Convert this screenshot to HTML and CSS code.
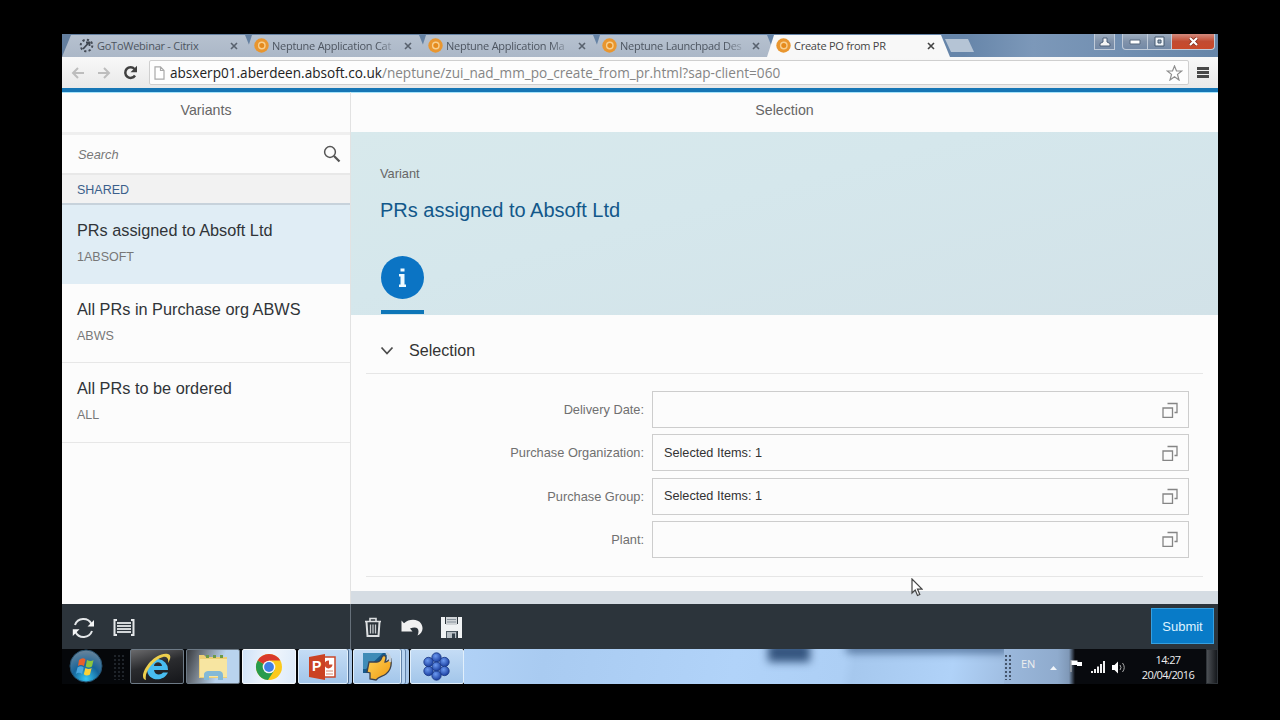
FILE: index.html
```html
<!DOCTYPE html>
<html lang="en">
<head>
<meta charset="utf-8">
<title>Create PO from PR</title>
<link rel="stylesheet" href="styles.css">
</head>
<body>
<svg class="defs" width="0" height="0" aria-hidden="true">
  <defs>
    <radialGradient id="orb" cx="50%" cy="90%" r="95%"><stop offset="0" stop-color="#35c8f5"/><stop offset=".45" stop-color="#16659b"/><stop offset="1" stop-color="#75899b"/></radialGradient>
    <radialGradient id="petal" cx="40%" cy="35%" r="65%"><stop offset="0" stop-color="#6c9af0"/><stop offset="1" stop-color="#1b3fa0"/></radialGradient>
    <linearGradient id="gold" x1="0" y1="0" x2="1" y2="1"><stop offset="0" stop-color="#ffd45a"/><stop offset="1" stop-color="#f09a10"/></linearGradient>
    <symbol id="ring" viewBox="0 0 15 15"><circle cx="7.5" cy="7.5" r="7.2" fill="#e9962f"/><circle cx="7.8" cy="7.5" r="3.2" fill="#e58a1c" stroke="#f8cf8e" stroke-width="1.4"/></symbol>
    <symbol id="help" viewBox="0 0 16 16"><path d="M1 6h9.500v9.500H1zM5.500 1.500H15v9h-2.500" fill="none" stroke="#858585" stroke-width="1.300"/></symbol>
  </defs>
</svg>
<div class="screen">
  <div class="tabstrip">
    <div class="tab first"><svg width="15" height="15" viewBox="0 0 15 15"><circle cx="7.500" cy="7.500" r="5.800" fill="none" stroke="#454c56" stroke-width="2" stroke-dasharray="2.200 2.300"/><path d="M4 11l5.500-6M7 4.500h3.500V8" fill="none" stroke="#3f4650" stroke-width="1.800"/></svg><span class="t">GoToWebinar - Citrix</span><svg class="x" viewBox="0 0 8 8"><path d="M1 1l6 6M7 1L1 7"/></svg></div>
    <div class="tab"><svg width="15" height="15"><use href="#ring"/></svg><span class="t fade">Neptune Application Cat</span><svg class="x" viewBox="0 0 8 8"><path d="M1 1l6 6M7 1L1 7"/></svg></div>
    <div class="tab"><svg width="15" height="15"><use href="#ring"/></svg><span class="t fade">Neptune Application Ma</span><svg class="x" viewBox="0 0 8 8"><path d="M1 1l6 6M7 1L1 7"/></svg></div>
    <div class="tab"><svg width="15" height="15"><use href="#ring"/></svg><span class="t fade">Neptune Launchpad Des</span><svg class="x" viewBox="0 0 8 8"><path d="M1 1l6 6M7 1L1 7"/></svg></div>
    <div class="tab active"><svg width="15" height="15"><use href="#ring"/></svg><span class="t">Create PO from PR</span><svg class="x" viewBox="0 0 8 8"><path d="M1 1l6 6M7 1L1 7"/></svg></div>
    <div class="newtab"></div>
    <div class="winbtns">
      <div class="wb user"><svg width="12" height="10" viewBox="0 0 12 10"><path d="M4 1h4v4l3 1.500V9H1V6.500L4 5z" fill="#f5f5f5" stroke="#4c5f78"/></svg></div>
      <div class="wb min"><svg width="12" height="6" viewBox="0 0 12 6"><path d="M1 1h10v4H1z" fill="#fff" stroke="#56687f"/></svg></div><div class="wb max"><svg width="11" height="11" viewBox="0 0 11 11"><path d="M1 1h9v9H1z" fill="#eef3f8" stroke="#45586f"/><path d="M4 4h3v3H4z" fill="#9ab" stroke="#45586f"/></svg></div><div class="wb close"><svg width="11" height="9" viewBox="0 0 11 9"><path d="M2 1l7 7M9 1L2 8" stroke="#7d2a1a" stroke-width="3.600"/><path d="M2 1l7 7M9 1L2 8" stroke="#fff" stroke-width="2.200"/></svg></div>
    </div>
  </div>
  <div class="toolbar">
    <svg class="nav" width="14" height="14" viewBox="0 0 14 14"><path d="M13 7H2M7 2L2 7l5 5"/></svg>
    <svg class="nav fwd" width="14" height="14" viewBox="0 0 14 14"><path d="M1 7h11M7 2l5 5-5 5"/></svg>
    <svg class="reload" width="15" height="15" viewBox="0 0 15 15"><path d="M12 10.500A5.300 5.300 0 1 1 11.500 4" fill="none" stroke="#404040" stroke-width="2.500"/><path d="M14 .8v6.500H7.500z" fill="#404040"/></svg>
    <div class="omnibox">
      <svg width="11" height="14" viewBox="0 0 11 14"><path d="M1 .8h5.500L10 4.500v8.700H1zM6.500 .8v3.700H10" fill="#fff" stroke="#a9a9a9" stroke-width="1.200"/></svg>
      <span class="url"><b>absxerp01.aberdeen.absoft.co.uk</b>/neptune/zui_nad_mm_po_create_from_pr.html?sap-client=060</span>
      <svg class="star" width="17" height="16" viewBox="0 0 17 16"><path d="M8.500 1l2 5h5.200l-4.200 3.400L13 15l-4.500-3.200L4 15l1.500-5.600L1.300 6h5.200z" fill="#fff" stroke="#8e8e8e" stroke-width="1.200"/></svg>
    </div>
    <div class="burger"><i></i><i></i><i></i></div>
  </div>
  <div class="app">
    <aside class="master">
      <div class="bar">Variants</div>
      <div class="search"><span>Search</span><svg width="18" height="18" viewBox="0 0 18 18"><circle cx="7" cy="7" r="5.400" fill="none" stroke="#555" stroke-width="1.500"/><path d="M11 11l5.500 5.500" stroke="#555" stroke-width="2.300"/></svg></div>
      <div class="group">SHARED</div>
      <div class="item sel"><div class="title">PRs assigned to Absoft Ltd</div><div class="sub">1ABSOFT</div></div>
      <div class="item"><div class="title">All PRs in Purchase org ABWS</div><div class="sub">ABWS</div></div>
      <div class="item"><div class="title">All PRs to be ordered</div><div class="sub">ALL</div></div>
      <div class="foot">
        <svg width="23" height="22" viewBox="0 0 23 22"><path d="M3 8A9 9 0 0 1 19.500 7M20 14A9 9 0 0 1 3.500 15" fill="none" stroke="#e4e7e9" stroke-width="2"/><path d="M22 3v6.500h-6.500zM.8 19v-6.800h6.700z" fill="#f4f5f6"/></svg>
        <svg class="lst" width="22" height="17" viewBox="0 0 22 17"><path d="M4 1H1.500v15H4M18 1h2.500v15H18" fill="none" stroke="#e4e7e9" stroke-width="2"/><path d="M4 4h14M4 7h14M4 10h14M4 13h14" stroke="#d2d6d8" stroke-width="1.800"/></svg>
      </div>
    </aside>
    <main class="detail">
      <div class="bar">Selection</div>
      <section class="object">
        <div class="kind">Variant</div>
        <div class="name">PRs assigned to Absoft Ltd</div>
        <div class="info"><svg width="43" height="43" viewBox="0 0 43 43"><circle cx="21.500" cy="21.500" r="21.500" fill="#0b74c4"/><path d="M19.500 12.500h4v3h-4zM18 18h5.500v10.500h1.500V31h-7v-2.500h1.500v-8H18z" fill="#edfaff"/></svg></div>
      </section>
      <section class="panel">
        <div class="phead"><svg width="14" height="10" viewBox="0 0 14 10"><path d="M1.500 1.500L7 7.500l5.500-6" fill="none" stroke="#4d4d4d" stroke-width="1.800"/></svg><span>Selection</span></div>
        <div class="form">
          <label>Delivery Date:</label><div class="input"><span></span><svg width="16" height="16"><use href="#help"/></svg></div>
          <label>Purchase Organization:</label><div class="input"><span>Selected Items: 1</span><svg width="16" height="16"><use href="#help"/></svg></div>
          <label>Purchase Group:</label><div class="input"><span>Selected Items: 1</span><svg width="16" height="16"><use href="#help"/></svg></div>
          <label>Plant:</label><div class="input"><span></span><svg width="16" height="16"><use href="#help"/></svg></div>
        </div>
      </section>
      <div class="gap"></div>
      <div class="foot">
        <svg width="18" height="20" viewBox="0 0 18 20"><path d="M1 4.500h16M6 4V1.500h6V4" fill="none" stroke="#dcdfe1" stroke-width="1.600"/><path d="M2.500 5l1 14h11l1-14" fill="none" stroke="#dcdfe1" stroke-width="2"/><path d="M6.500 7.500v9M9 7.500v9M11.500 7.500v9" stroke="#c6cacd" stroke-width="1.300"/></svg>
        <svg class="undo" width="22" height="17" viewBox="0 0 22 17"><path d="M.5 1.500L3 4.200C8-.5 17-.3 20 4.500c3 5 1.500 9.500-3.500 12C19 11 17 6.500 9 9.500l2.500 3L.5 12.500z" fill="#f1f1f1"/></svg>
        <svg class="save" width="21" height="21" viewBox="0 0 21 21"><path d="M0 0h4v8h13V0h4v21h-4v-8H5v8H0z" fill="#f0f2f3"/><path d="M0 7h21v7H0z" fill="#f0f2f3"/><path d="M5 0h11v8H5z" fill="#cfd3d6"/><path d="M6 2.500h9M6 5h9" stroke="#87919a" stroke-width="1"/><path d="M5 14h11v7H5z" fill="#4c5861"/><path d="M6 15h9v6H6z" fill="#b7bec3"/><path d="M11 16.500h3V21h-3z" fill="#34404a"/></svg>
        <div class="submit">Submit</div>
      </div>
    </main>
    <svg class="cursor" width="12" height="19" viewBox="0 0 12 19"><path d="M1 1v14l3.200-3 2.300 5.500 2.300-1-2.300-5.300H11z" fill="#fff" stroke="#444" stroke-width="1.200"/></svg>
  </div>
  <div class="taskbar">
    <svg class="orb" width="36" height="34" viewBox="0 0 36 34"><circle cx="18" cy="17" r="16" fill="url(#orb)" stroke="#24506e"/><path d="M11 11q4-3 6.500-.5L16 17q-3.500-2-6 0z" fill="#e8602c"/><path d="M19 11q4 2 6.500 0L24 17.500q-3.500 2-6.300 0z" fill="#8cc63e"/><path d="M9.500 18.500q3.500-2.500 6.200 0L14 25q-3.500-2.500-6 0z" fill="#4ba7e0"/><path d="M17.400 19q3.500 2 6.200 0L22 25.500q-3.500 2-6.200-.3z" fill="#fbd237"/></svg>
    <div class="grip dim"></div>
    <div class="task dark"><svg width="36" height="30" viewBox="0 0 36 30"><path d="M8 17a10.500 10.500 0 1 1 21 1H15c.5 5.500 7 5.500 9 2.500h5C24 31 8 29 8 17zm7-3h8c-.5-5-7.500-5-8 0z" fill="#48bdf0"/><path d="M7 28C-3 26 14-1 29 2c4 1 2 6 0 9 1-4-1-7-5-6C14 8 5 20 7 28z" fill="#edcf4d"/></svg></div>
    <div class="task half"><svg width="32" height="29" viewBox="0 0 32 29"><path d="M2 3h5l2 2h21v21H2z" fill="#edcf75"/><path d="M3 7h27v18H3z" fill="#f7e5a1"/><path d="M9 3h3v3H9zM16 3h3v3h-3zM23 3h3v3h-3z" fill="#6b9a48"/><path d="M7 28v-5c0-3 2-4 5-4h9c4 0 5 2 5 4v5h-5v-4h-9v4z" fill="#83b9d6"/></svg></div>
    <div class="task light"><svg width="28" height="28" viewBox="0 0 28 28"><circle cx="14" cy="14" r="13" fill="#fbc91d"/><path d="M14 14L2.700 7.500A13 13 0 0 0 13 27l6.500-10z" fill="#279b4c"/><path d="M14 14L2.700 7.500A13 13 0 0 1 25.300 7.500H14z" fill="#d93a2c"/><circle cx="14" cy="14" r="6.300" fill="#f5f6f8"/><circle cx="14" cy="14" r="4.900" fill="#3f7fe6"/></svg></div>
    <div class="task blue ppt"><svg width="29" height="28" viewBox="0 0 29 28"><path d="M13 4h14v20H13z" fill="#fff" stroke="#c9472a" stroke-width="1.500"/><path d="M21 7.500a4 4 0 1 0 3.500 4H21z" fill="#cf4a2c"/><path d="M18 18h7M18 21h7" stroke="#d88871" stroke-width="1.200"/><path d="M1 4l16-3v26L1 24z" fill="#cb4223"/></svg><b>P</b></div>
    <div class="task blue sap"><svg width="31" height="29" viewBox="0 0 31 29"><path d="M1 1h24l-2 20H1z" fill="#17598a"/><path d="M1 1h20L4 17H1z" fill="#3e8bb7"/><path d="M7 10h8c3 0 4-2 5-5 1-2 4-2 4 1l-1 4c3 0 4-3 6-3 1 7-1 12-5 15-4 3-7 2-10 6l-6-1V21l-3-1z" fill="url(#gold)" stroke="#3b4250" stroke-width="1.300"/><path d="M24 1q5 3 4 9" fill="none" stroke="#c3ced8" stroke-width="2.500"/></svg></div>
    <div class="task blue gtw"><svg width="29" height="29" viewBox="0 0 29 29"><g fill="url(#petal)" stroke="#183683" stroke-width=".8"><circle cx="14.500" cy="5.500" r="4.700"/><circle cx="22.500" cy="10" r="4.700"/><circle cx="22.500" cy="19" r="4.700"/><circle cx="14.500" cy="23.500" r="4.700"/><circle cx="6.500" cy="19" r="4.700"/><circle cx="6.500" cy="10" r="4.700"/><circle cx="14.500" cy="14.500" r="4.500"/></g></svg></div>
    <div class="glass"><i class="smudge a"></i><i class="smudge b"></i></div>
    <div class="tray">
      <div class="grip"></div><span class="lang">EN</span>
      <svg class="up" width="7" height="4" viewBox="0 0 7 4"><path d="M0 4L3.500 0 7 4z" fill="#f1f5fa"/></svg>
      <svg class="flag" width="13" height="13" viewBox="0 0 13 13"><path d="M1 1v12" stroke="#bbb"/><path d="M1.500 1.500h6v1.500h4.500v4H7V6H1.500z" fill="#fff"/></svg>
      <svg class="sig" width="15" height="12" viewBox="0 0 15 12"><path d="M1 10h2v2H1zM4 8h2v4H4zM7 5.500h2V12H7zM10 3h2v9h-2zM13 0h2v12h-2z" fill="#f0f0f0"/></svg>
      <svg class="vol" width="14" height="13" viewBox="0 0 14 13"><path d="M0 4h2.500L6 .5v12L2.500 9H0z" fill="#fff"/><path d="M8 4q2 2.500 0 5M10.500 2q3.500 4.500 0 9" fill="none" stroke="#aaa"/></svg>
      <div class="clock"><span>14:27</span><span>20/04/2016</span></div>
      <div class="peek"></div>
    </div>
  </div>
</div>
</body>
</html>
```
FILE: styles.css
```css
* { box-sizing: border-box; }
body { margin: 0; width: 1280px; height: 720px; background: #000; overflow: hidden; font-family: "Liberation Sans", Arial, sans-serif; }
.defs { display: block; height: 0; }
svg { flex: none; }
.screen { margin: 34px 0 0 62px; width: 1156px; height: 650px; display: flex; flex-direction: column; background: #fcfcfc; }

.tabstrip { height: 23px; display: flex; flex: none; background: linear-gradient(90deg, #647f9f, #6685a9 78%, #7c98b9 84%, #6685a8); }
.tab { width: 183px; margin-left: -9px; height: 23px; display: flex; align-items: center; padding: 0 16px 0 9px; gap: 3px; background: linear-gradient(#b7c2d0, #abb7c7); clip-path: polygon(7px 1px, 174px 1px, 183px 100%, 0 100%); flex: none; font-family: "Open Sans", "Noto Sans", sans-serif; font-size: 11px; color: #4d5560; }
.tab.first { width: 192px; margin-left: 0; padding-left: 17px; clip-path: polygon(9px 1px, 183px 1px, 192px 100%, 0 100%); }
.tab.active { background: #f8f8f8; color: #444; width: 184px; }
.t { flex: 1; min-width: 0; white-space: nowrap; letter-spacing: -.25px; }
.t.fade { -webkit-mask-image: linear-gradient(90deg, #000 105px, transparent 127px); mask-image: linear-gradient(90deg, #000 105px, transparent 127px); }
.x { width: 8px; height: 8px; fill: none; stroke: #59626e; stroke-width: 1.6; }
.active .x { stroke: #444; }
.newtab { width: 29px; height: 13px; margin: 5px 0 0 -6px; background: #b5c4d5; clip-path: polygon(0 0, 23px 0, 29px 100%, 6px 100%); }
.winbtns { margin-left: auto; display: flex; padding-right: 3px; height: 16px; }
.wb { height: 16px; border: 1px solid #c0cbd9; border-top: 0; display: flex; align-items: center; justify-content: center; background: linear-gradient(#9eadbf, #8193ab 50%, #7389a6); }
.user { width: 21px; margin-right: 7px; }
.min { width: 26px; border-radius: 0 0 0 4px; }
.max { width: 24px; border-left: 0; }
.close { width: 43px; border-radius: 0 0 4px 0; background: linear-gradient(#d28a7d, #c24b31 50%, #c9492a); border-left: 0; }

.toolbar { height: 31px; flex: none; display: flex; align-items: center; background: linear-gradient(#f8f8f8, #e9e9e9); padding: 0 9px; }
.nav { fill: none; stroke: #bdbdbd; stroke-width: 2; }
.fwd { margin-left: 12px; }
.reload { margin-left: 12px; }
.omnibox { flex: none; width: 1040px; height: 25px; margin-left: 11px; background: #fdfdfd; border: 1px solid #cfcfcf; border-radius: 2px; display: flex; align-items: center; padding: 0 5px 0 4px; }
.url { margin-left: 5px; font: 13.6px "Open Sans", "Noto Sans", sans-serif; color: #858585; white-space: nowrap; }
.url b { font-weight: 400; color: #222; }
.star { margin-left: auto; }
.burger { margin-left: 8px; display: flex; flex-direction: column; gap: 1px; }
.burger i { width: 12px; height: 3px; background: #484848; }

.app { height: 561px; flex: none; display: flex; border-top: 4px solid #1676b5; position: relative; box-shadow: inset 0 1px #a6e3fa; }
.master { width: 289px; border-right: 1px solid #e2e2e2; display: flex; flex-direction: column; }
.bar { height: 40px; flex: none; display: flex; align-items: center; justify-content: center; padding-bottom: 5px; font-size: 14.2px; color: #666; }
.master .bar { height: 43px; padding-bottom: 5px; border-bottom: 3px solid #efefef; }
.search { height: 38px; display: flex; align-items: center; justify-content: space-between; padding: 0 9px 0 16px; font-size: 12.8px; font-style: italic; color: #777; }
.group { height: 32px; background: #f2f2f2; border-top: 2px solid #e8e8e8; border-bottom: 2px solid #c7d2db; padding: 8px 15px 0; font-size: 12.5px; line-height: 15px; color: #3b5f8b; }
.item { height: 79px; padding: 15px 15px 0; border-bottom: 1px solid #e7e7e7; }
.item + .item { height: 79.3px; }
.sel { background: #e0edf5; border: 0; }
.title { font-size: 16.3px; line-height: 20px; color: #303438; white-space: nowrap; }
.sub { margin-top: 9px; font-size: 12.5px; line-height: 16px; color: #777; }
.foot { margin-top: auto; height: 45px; background: #2c343b; display: flex; align-items: center; padding: 2px 10px 0; flex: none; }
.lst { margin-left: 18px; }
.detail { width: 867px; display: flex; flex-direction: column; }
.object { height: 183px; flex: none; background: linear-gradient(165deg, #d8e9ec, #d5e7ec 40%, #d2e2e8); padding: 34px 29px 0; }
.kind { font-size: 12.8px; line-height: 16px; color: #666; }
.name { margin-top: 16px; font-size: 20px; line-height: 24px; color: #12588a; }
.info { margin: 34px 0 0 1px; width: 43px; height: 58px; border-bottom: 4px solid #0e76b8; }
.panel { height: 276px; flex: none; padding: 0 15px; }
.phead { height: 59px; border-bottom: 1px solid #e6e6e6; display: flex; align-items: center; gap: 15px; padding: 13px 0 0 14px; font-size: 16.1px; color: #333; }
.form { height: 203px; border-bottom: 1px solid #e6e6e6; display: grid; grid-template-columns: 278px 537px; grid-auto-rows: 37px; row-gap: 6.3px; column-gap: 8px; padding-top: 17px; align-items: center; }
.form label { text-align: right; font-size: 12.8px; color: #707070; white-space: nowrap; }
.input { height: 37px; border: 1px solid #cdcdcd; display: flex; align-items: center; justify-content: space-between; padding: 0 10px 0 11px; font-size: 12.7px; color: #333; }
.gap { height: 13px; background: #d5dce3; flex: none; }
.detail .foot { border-left: 1px solid #66707a; margin-left: -1px; padding: 1px 4px 0 13px; }
.undo { margin-left: 19px; }
.save { margin-left: 18px; }
.submit { margin-left: auto; width: 63px; height: 36px; margin-bottom: 2px; background: #087bc8; border: 1px solid #36a0e0; display: flex; align-items: center; justify-content: center; font-size: 13px; color: #dff3ff; }
.cursor { position: absolute; left: 849px; top: 486px; }

.taskbar { height: 35px; flex: none; display: flex; background: #05070a; overflow: hidden; }
.orb { margin-left: 6px; }
.grip { width: 8px; height: 26px; margin-top: 5px; background: radial-gradient(circle, #39414a 0 1px, transparent 1.3px) 0 0 / 4px 4px; }
.grip.dim { margin-left: 9px; width: 12px; opacity: .5; }
.task { width: 54px; height: 35px; margin-left: 2px; border: 1px solid #6d7a86; border-radius: 2px; display: flex; align-items: center; justify-content: center; flex: none; position: relative; }
.dark { background: linear-gradient(165deg, #6a6a6c, #2a2b2e 45%, #15161a); margin-left: 5px; }
.half { background: linear-gradient(110deg, #383b40, #79838e 30%, #b9d3ee 62%); }
.light { background: linear-gradient(100deg, #cfe2f8, #f1f6fc 50%, #dceafa); border-color: #f4f8fc; }
.blue { background: linear-gradient(#c4dcf5, #a3c6ea); border-color: #e1effb; }
.ppt { width: 50px; padding-right: 2px; box-shadow: 1px 0 #48698f, 4px 0 #a6c4e6; }
.ppt b { position: absolute; left: 13px; top: 8px; font-size: 14px; line-height: 17px; color: #fff; }
.sap { width: 48px; margin-left: 5px; box-shadow: 1px 0 #6383a9, 4px 0 #b9d5f2, 5px 0 #6383a9, 8px 0 #a9c8ea; }
.gtw { width: 54px; margin-left: 9px; padding-right: 2px; }
.glass { flex: 1; background: linear-gradient(100deg, #b0d1f6, #a9cbf1 15%, #b1d3f9 50%, #adcff5 70%, #a6c8ee 72%, #b0d2f8 90%, #a0bee2); position: relative; overflow: hidden; }
.smudge { position: absolute; filter: blur(4px); background: #35557f; }
.smudge.a { left: 304px; top: -6px; width: 42px; height: 19px; }
.smudge.b { left: 382px; top: -5px; width: 162px; height: 9px; opacity: .75; }
.tray { width: 214px; height: 35px; flex: none; display: flex; background: linear-gradient(90deg, #9bb8dc, #8fabcd 25%, #7f98b7 65px, #080a0e 71px); color: #eee; }
.tray .grip { background: radial-gradient(circle, #45566d 0 1px, transparent 1.3px) 0 0 / 4px 4px; }
.lang { margin: 8px 0 0 9px; font: 11px/14px "Open Sans", sans-serif; width: 14px; }
.up { margin: 17px 0 0 15px; }
.flag { margin: 10px 0 0 13px; }
.sig { margin: 12px 0 0 7px; }
.vol { margin: 12px 0 0 7px; }
.clock { margin-left: 10px; width: 64px; text-align: center; display: flex; flex-direction: column; padding-top: 3px; font: 11px/15px "Open Sans", sans-serif; letter-spacing: -.6px; }
.peek { margin-left: auto; width: 12px; background: linear-gradient(90deg, #4c5055, #15181c); border: 1px solid #30353a; }
```
